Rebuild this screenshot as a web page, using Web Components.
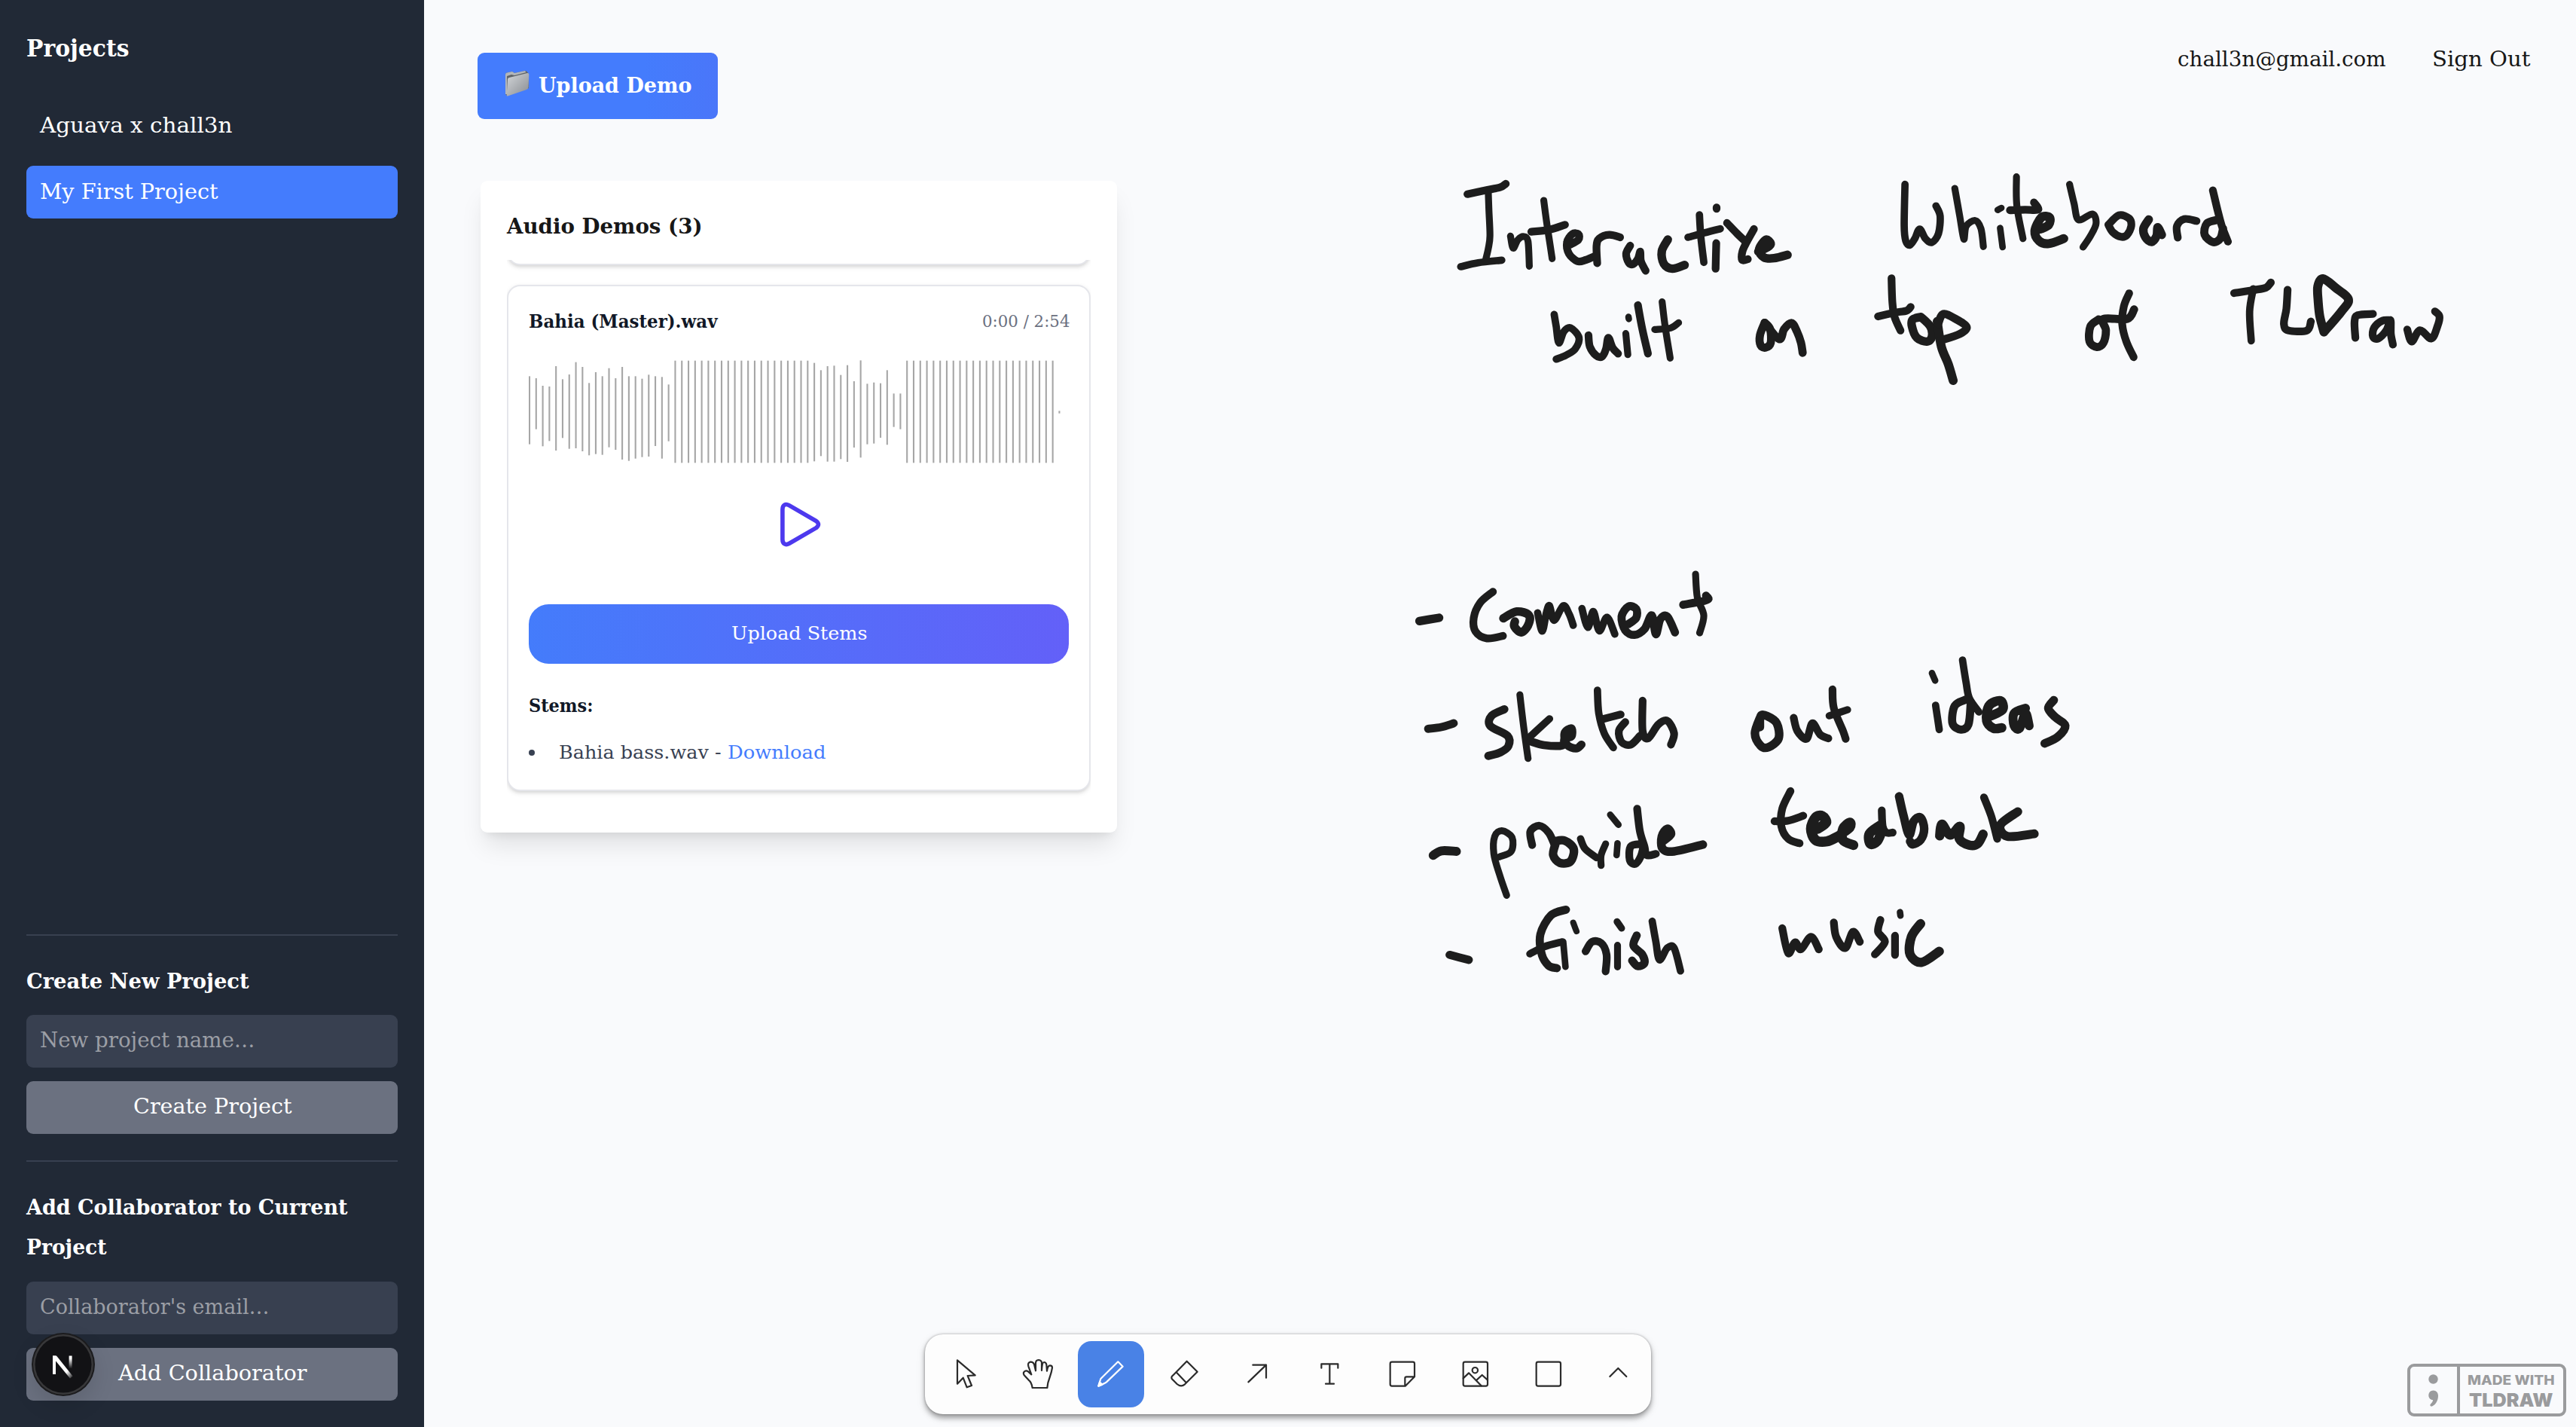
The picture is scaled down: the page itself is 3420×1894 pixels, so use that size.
<!DOCTYPE html>
<html lang="en">
<head>
<meta charset="utf-8">
<title>Projects</title>
<style>
  html, body { margin: 0; height: 100%; }
  body {
    background: #f9fafc;
    color: #171717;
    font-family: "DejaVu Serif", "Liberation Serif", serif;
    overflow: hidden;
  }
</style>
</head>
<body>
<studio-app></studio-app>

<script>
const define = (name, html, setup) => {
  const tpl = document.createElement('template');
  tpl.innerHTML = html;
  customElements.define(name, class extends HTMLElement {
    constructor() {
      super();
      this.attachShadow({ mode: 'open' }).append(tpl.content.cloneNode(true));
    }
    connectedCallback() {
      if (setup) setup(this, this.shadowRoot);
    }
  });
};

/* One line of text whose glyphs are stretched to fill a given measure. */
define('fit-text', `
  <style>
    :host { display: block; white-space: nowrap; flex: none; }
    span { display: inline-block; transform-origin: 0 50%; }
  </style>
  <span><slot></slot></span>`, (el, root) => {
  const span = root.querySelector('span');
  const w = +el.getAttribute('w');
  const size = el.getAttribute('size') || 28.5;
  el.style.fontSize = size + 'px';
  el.style.width = w + 'px';
  const natural = span.getBoundingClientRect().width;
  span.style.transform = `scaleX(${((w + 1.5) / natural).toFixed(4)})`;
});

define('project-item', `
  <style>
    :host { display: flex; align-items: center; box-sizing: border-box; height: 70px; padding: 0 0 1px 18px; border-radius: 9px; color: #fff; }
    :host([active]) { background: #447cfd; }
  </style>
  <slot></slot>`);

define('side-form', `
  <style>
    :host { display: flex; flex-direction: column; border-top: 2px solid #384050; padding-top: 34px; }
    .head { font-weight: 700; line-height: 52.8px; margin-bottom: 19px; }
    .field { display: flex; align-items: center; box-sizing: border-box; height: 70px; padding: 0 0 3px 18px; background: #384050; border-radius: 9px; color: #9b9ea5; margin-bottom: 18px; }
    .btn { display: flex; align-items: center; justify-content: center; box-sizing: border-box; height: 70px; padding-bottom: 3px; background: #6b7180; border-radius: 9px; }
  </style>
  <div class="head"><slot name="head"></slot></div>
  <div class="field"><slot name="field"></slot></div>
  <div class="btn"><slot name="action"></slot></div>`);

define('dev-badge', `
  <style>:host { display: block; position: absolute; left: 41.5px; top: 1768.5px; width: 84px; height: 84px; border-radius: 50%; box-shadow: 0 12px 30px rgba(0,0,0,.12); }</style>
  <svg width="84" height="84" viewBox="0 0 84 84">
    <defs>
      <linearGradient id="a" x1="0" y1="0" x2="1" y2="1"><stop offset=".7" stop-color="#fff"/><stop offset="1" stop-color="#fff" stop-opacity="0"/></linearGradient>
      <linearGradient id="b" x1="0" y1="0" x2="0" y2="1"><stop offset=".2" stop-color="#fff"/><stop offset="1" stop-color="#fff" stop-opacity="0"/></linearGradient>
    </defs>
    <circle cx="42" cy="42" r="42" fill="#1b1b1d"/>
    <circle cx="42" cy="42" r="40" fill="#38383a"/>
    <circle cx="42" cy="42" r="37.5" fill="#121215"/>
    <rect x="28" y="30.5" width="4" height="24.5" fill="#fff"/>
    <rect x="49.6" y="30.5" width="4" height="17" fill="url(#b)"/>
    <path d="M28 30.5h5L54.6 57.5L51 60.5L28 32.5z" fill="url(#a)"/>
  </svg>`);

define('project-sidebar', `
  <style>
    :host { display: flex; flex-direction: column; box-sizing: border-box; width: 563px; height: 1894px; padding: 36px 35px 35px; background: #212936; color: #fff; flex: none; }
    .title { display: flex; align-items: center; height: 56px; margin-bottom: 40px; font-weight: 700; }
    nav { display: flex; flex-direction: column; gap: 18px; flex: 1; }
    .forms { display: flex; flex-direction: column; gap: 35px; }
  </style>
  <div class="title"><fit-text w="135" size="31">Projects</fit-text></div>
  <nav>
    <project-item><fit-text w="254">Aguava x chall3n</fit-text></project-item>
    <project-item active><fit-text w="235">My First Project</fit-text></project-item>
  </nav>
  <div class="forms">
    <side-form>
      <fit-text slot="head" w="294">Create New Project</fit-text>
      <fit-text slot="field" w="284">New project name…</fit-text>
      <fit-text slot="action" w="209">Create Project</fit-text>
    </side-form>
    <side-form>
      <fit-text slot="head" w="425">Add Collaborator to Current</fit-text>
      <fit-text slot="head" w="105">Project</fit-text>
      <fit-text slot="field" w="303">Collaborator's email…</fit-text>
      <fit-text slot="action" w="249">Add Collaborator</fit-text>
    </side-form>
  </div>`);

define('upload-button', `
  <style>
    :host { display: flex; align-items: center; box-sizing: border-box; width: 319px; height: 88px; padding: 0 0 2px 35px; gap: 9px; border-radius: 9px; color: #fff; font-weight: 600; background: linear-gradient(90deg, #447cfd 70%, #4a76f9); }
    svg { flex: none; margin-bottom: 2px; }
  </style>
  <svg width="37" height="40" viewBox="0 0 37 40">
    <defs><linearGradient id="f" x1="0" y1="0" x2="1" y2="1"><stop offset="0" stop-color="#d3d6d9"/><stop offset="1" stop-color="#888c91"/></linearGradient></defs>
    <path d="M2 7Q2 5 4 4.600L11 3L14 5L28 2Q30 1.500 31 3.500L33 6V25L4 35L2 33Z" fill="#5e6368"/>
    <path d="M2 7Q2 5 4 4.600L11 3L14 5L28 2L29.500 4L14 8L10 7L4 9V33L2 33Z" fill="#b2b6ba"/>
    <path d="M5 13Q5 11.500 7 11L31 5Q33.500 4.600 33.300 7L32.500 24Q32.400 26 30 27L5 35.500Q3.600 36 3.700 34Z" fill="url(#f)"/>
  </svg>
  <fit-text w="202">Upload Demo</fit-text>`);

define('account-links', `
  <style>:host { display: flex; gap: 63px; line-height: 48px; color: #171717; }</style>
  <fit-text w="275">chall3n@gmail.com</fit-text>
  <fit-text w="129">Sign Out</fit-text>`);

define('wave-form', `
  <style>:host, svg { display: block; }</style>
  <svg width="717" height="152" viewBox="702 470 717 152" stroke="#a6a6a6" stroke-width="2.1"></svg>`, (el, root) => {
  const FULL = [776, 1183];
  const bars = [
    [838,1109],[846,1049],[876,1117],[879,1096],[798,1134],[850,1084],[831,1127],[782,1125],[801,1137],[865,1153],
    [822,1148],[838,1151],[806,1121],[846,1131],[801,1170],[838,1175],[838,1166],[848,1160],[832,1158],[838,1116],
    [841,1166],[871,1097],...Array(21).fill(FULL),[785,1177],[814,1156],[798,1178],[796,1178],[833,1168],[794,1179],
    [858,1122],[775,1162],[868,1109],[863,1106],[866,1083],[814,1111],[907,1040],[907,1049],...Array(23).fill(FULL),[976,986]
  ];
  root.querySelector('svg').innerHTML = bars.map(([a, b], i) => {
    const x = (703 + i * 8.793).toFixed(2);
    return `<path d="M${x} ${220 + a / 3}V${220 + b / 3}"/>`;
  }).join('');
});

define('demo-card', `
  <style>
    :host { display: block; box-sizing: border-box; width: 774.6px; border: 2.2px solid #e5e6eb; border-radius: 17.6px; background: #fff; padding: 21px 27px 0; flex: none; box-shadow: 0 2.2px 6px rgba(0,0,0,.1), 0 2.2px 4px -2px rgba(0,0,0,.1); }
  </style>
  <slot></slot>`);

define('demo-player', `
  <style>
    :host { display: flex; flex-direction: column; height: 647px; }
    .row { display: flex; justify-content: space-between; align-items: center; height: 50px; margin-bottom: 19px; }
    .name { font-weight: 600; color: #111827; }
    .time { color: #6b7080; }
    .play { display: flex; justify-content: center; align-items: center; height: 148.6px; margin-bottom: 31.4px; }
    .btn { display: flex; justify-content: center; align-items: center; box-sizing: border-box; height: 79px; padding-bottom: 2px; border-radius: 26.4px; color: #fff; background: linear-gradient(90deg, #447cfb, #6360f8); }
    .stems { margin-top: 34px; line-height: 44px; font-weight: 600; color: #111827; }
    .item { display: flex; align-items: center; margin-top: 18px; line-height: 44px; color: #384152; }
    .dot { width: 8px; height: 8px; border-radius: 50%; background: #384152; margin-right: 32px; }
    .link { color: #447cfd; margin-left: 10px; }
  </style>
  <div class="row">
    <fit-text class="name" w="249" size="25">Bahia (Master).wav</fit-text>
    <fit-text class="time" w="115" size="21.5">0:00 / 2:54</fit-text>
  </div>
  <wave-form></wave-form>
  <div class="play">
    <svg width="64" height="64" viewBox="0 0 64 64" fill="none" stroke="#4d39ee" stroke-width="5.6" stroke-linejoin="round">
      <path d="M10.900 12C10.900 6 15 4 19.500 6.700L55.500 27.500Q61.500 32 55.500 36.700L19.500 57.500C15 60 10.900 58 10.900 52Z"/>
    </svg>
  </div>
  <div class="btn"><fit-text w="179" size="25">Upload Stems</fit-text></div>
  <fit-text class="stems" w="84" size="25">Stems:</fit-text>
  <div class="item"><div class="dot"></div><fit-text w="214" size="25">Bahia bass.wav -</fit-text><fit-text class="link" w="129" size="25">Download</fit-text></div>`);

define('demo-panel', `
  <style>
    :host { display: flex; flex-direction: column; box-sizing: border-box; width: 845.4px; height: 865px; padding: 35px; border-radius: 9px; background: #fff; box-shadow: 0 22px 33px -6.6px rgba(0,0,0,.1), 0 8.8px 13.2px -8.8px rgba(0,0,0,.1); }
    .title { display: flex; align-items: center; height: 50px; margin-bottom: 20px; font-weight: 700; }
    .list { display: flex; flex-direction: column; gap: 26.500px; height: 725px; overflow: hidden; }
    .prev { height: 60px; margin-top: -53.500px; padding-top: 0; }
  </style>
  <div class="title"><fit-text w="258">Audio Demos (3)</fit-text></div>
  <div class="list">
    <demo-card class="prev"></demo-card>
    <demo-card><demo-player></demo-player></demo-card>
  </div>`);

/* Freehand pen layer: each entry is [originX, originY, unitsPerPxX, strokes]; y is sampled at 3 units per px.
   A stroke may start with "w=" to set the nib width. */
define('ink-layer', `
  <style>:host { display: block; position: absolute; left: 0; top: 0; pointer-events: none; } svg { display: block; }</style>
  <svg width="3420" height="1894" fill="none" stroke="#1d1d1d" stroke-linecap="round" stroke-linejoin="round"></svg>`, (el, root) => {
  const sheets = [
    [1900, 200, 2.24, `
      w=9.5 108,173 160,158 205,146 222,132
      w=8.5 170,165 172,240 175,340 170,390 163,430
      w=9 88,462 140,446 210,436
      w=8.5 236,340 244,388 258,355 275,342 288,360 292,460
      w=8.5 335,198 344,290 351,350 360,430
      298,323 350,315 398,295
      412,375 438,355 438,332 420,332 404,365 410,410 435,440 460,435 490,418
      494,448 492,380 500,350 530,335 562,345
      592,378 580,410 587,445 600,452 615,430 622,402 624,440 638,478
      w=10.5 704,354 686,400 692,450 718,470 754,455
      w=9 798,255 802,340 811,445
      w=9 764,345 810,328 860,311
      848,368 846,470
      849,226 849,231
      880,288 910,330 935,362
      960,312 940,360 926,400 925,435 942,432
      w=10.5 973,402 1000,385 1010,370 995,355 975,395 990,425 1020,428 1060,415
      w=9 366,652 372,700 380,765 395,720 415,706 440,745 428,790 400,815 372,830
      468,735 472,780 490,815 508,820 520,790 527,745 540,785 556,808
      w=8.5 579,728 585,812
      w=8 587,662 588,670
      615,615 628,710 645,808
      w=8.5 687,602 696,700 711,826
      w=8.5 665,712 712,706 736,685
      w=10 992,685 978,735 980,775 995,784 1010,765 1008,710 992,685
      w=10 992,685 1035,750 1050,710 1072,686 1088,720 1100,765 1105,805`],
    [2450, 200, 1.8447, `
      w=9 146,134 144,300 148,360 158,376 170,350 182,312 196,350 212,365 228,330 232,260 222,220
      w=8.5 268,150 280,260 290,352 296,300 318,278 332,310 338,382
      w=8 379,308 385,384
      w=8 373,236 382,228
      w=8.5 419,104 420,220 435,350
      403,237 440,235 472,235 462,206
      w=11 478,312 498,295 500,266 480,266 464,320 475,360 498,370 535,350
      w=8.5 549,134 560,210 571,275 605,252 614,290 600,340 582,384
      644,295 670,257 695,270 700,300 690,335 675,343 655,325 644,295
      w=10.5 743,274 730,310 735,345 750,363 762,340 765,305 775,335
      w=9.5 814,346 812,300 830,272 860,280
      900,158 912,240 922,300 937,362
      w=10 912,275 885,290 880,335 900,364 918,350 925,310
      113,508 115,600 120,660 135,716
      80,660 120,645 150,637 160,622
      w=10.5 185,662 165,672 163,700 175,745 200,760 212,740 208,700 185,662
      w=11 225,680 235,780 252,850 264,915
      w=10 227,690 240,650 270,670 297,702 280,730 234,755
      w=10 620,672 600,700 598,760 616,782 632,765 638,715 632,670 690,670 707,632
      695,568 682,620 678,690 688,760 706,822
      952,567 1000,555 1030,545 1042,525
      w=9 999,550 990,640 994,757
      1083,554 1080,630 1074,690 1085,716 1130,716 1140,680
      w=11 1172,722 1162,660 1158,600 1157,540 1170,510 1200,545 1232,592 1215,640 1172,722
      1249,745 1247,680 1255,655 1292,650
      1335,675 1315,677 1295,705 1292,740 1305,748 1325,715 1335,675 1336,730 1341,772
      1376,712 1387,760 1407,715 1435,748 1450,700 1455,660 1444,640`],
    [1850, 740, 1.6505, `
      w=10.5 57,253 100,240
      w=9.5 218,136 190,180 176,240 180,295 205,322 240,312
      w=10.500 241,242 270,215 297,230 295,270 280,298 265,275 266,255
      w=9 316,220 326,293 335,220 342,192 352,250 372,192 385,225 394,270
      w=9 413,203 426,278 438,215 451,292 468,238 485,305
      w=10 515,265 532,240 532,205 515,195 500,235 508,290 528,308 550,285 566,230 575,305 585,245 600,235 617,298
      w=8.5 662,66 666,160 680,230 671,300
      w=10 635,188 675,175 690,165 685,152
      w=10 76,682 105,675 132,660
      w=10 243,604 215,630 212,670 250,710 252,750 235,775 208,790
      w=8.5 277,546 285,670 295,800
      w=9 342,642 300,712
      w=10 300,732 330,747 370,748 375,720 390,712 390,680 375,700 380,745 400,760 412,745
      w=9 447,528 450,620 462,700 482,757
      455,645 498,625
      508,655 494,690 500,735 520,745 540,710
      546,570 546,690 558,720 580,665 600,650 615,700 608,745
      w=10.5 805,630 792,700 805,750 822,755 844,720 840,660 820,632 805,630 803,675
      877,638 885,690 905,722 918,660 935,705 953,720
      962,525 965,600 985,690 991,722
      w=9 955,630 995,606
      w=9 1188,588 1196,685
      w=8 1180,460 1187,490
      w=9 1247,408 1255,500 1262,560 1283,615
      w=10 1255,565 1230,590 1225,660 1243,685 1260,665 1265,580
      w=11.5 1310,630 1335,605 1330,570 1305,590 1300,650 1315,680 1333,678
      w=11 1385,600 1360,620 1360,670 1372,680 1385,620 1393,670
      w=10.500 1447,568 1435,600 1450,635 1472,670 1455,715 1427,740`],
    [1850, 1020, 1.6505, `
      w=11 87,346 105,328 138,330
      w=8.5 248,505 232,420 220,340 222,270 238,248 260,275 258,330 232,352
      w=9.500 304,305 300,250 320,228 340,255 352,300
      w=10.500 352,290 375,287 395,320 388,370 365,376 350,345 355,300
      w=9 410,280 420,320 445,355
      w=8.5 465,300 455,345 455,386
      w=8 491,298 489,345
      w=8 475,184 493,224
      534,160 540,250 550,310 555,345 575,340
      545,300 520,310 518,365 530,380 542,350 548,310
      w=10.5 590,290 608,262 600,240 588,270 590,320 615,330 678,303
      w=9.5 870,90 852,160 850,230 865,280 890,298
      835,210 865,208 898,188
      w=12.5 930,240 948,215 940,190 925,195 915,240 925,285 950,290 975,270
      w=12 980,262 1000,235 1000,215 985,240 985,285 1008,305
      1070,167 1072,230 1080,255 1094,255
      w=12 1065,228 1043,260 1045,300 1060,290 1070,250
      w=10.500 1108,111 1118,190 1130,265 1140,210 1155,195 1163,240 1155,285 1138,302 1132,290
      w=11.5 1197,268 1202,222 1220,265 1241,230 1240,280 1262,305 1280,300 1292,262
      1294,115 1310,190 1323,280
      w=11 1368,172 1330,225 1345,270 1404,260
      w=10 123,742 165,762
      w=10 378,562 345,585 322,660 325,740 340,785 358,795
      w=9 299,738 330,710 370,690
      w=8 372,690 377,790
      w=7.5 394,614 401,648
      w=9.5 421,728 435,690 455,695 467,740 465,808
      w=8.5 491,704 491,790
      w=8.5 490,610 500,636
      w=10 533,665 526,705 545,740 550,775 535,787 523,765
      w=9 567,608 575,690 583,762 600,715 615,715 629,806
      w=9.5 852,636 865,735 880,692 893,720 915,670 932,720
      965,613 970,670 990,715 1007,650 1022,690
      1067,603 1062,650 1077,690 1055,740
      1099,666 1099,742
      w=8 1110,572 1111,586
      w=11.5 1155,618 1135,670 1132,740 1157,772 1196,728`]
  ];
  const smooth = p => {
    let d = `M${p[0]}`;
    for (let i = 0; i < p.length - 1; i++) {
      const a = p[i - 1] || p[i], b = p[i], c = p[i + 1], e = p[i + 2] || c;
      d += `C${[b[0] + (c[0] - a[0]) / 6, b[1] + (c[1] - a[1]) / 6, c[0] - (e[0] - b[0]) / 6, c[1] - (e[1] - b[1]) / 6, c[0], c[1]].map(v => v.toFixed(1))}`;
    }
    return d;
  };
  root.querySelector('svg').innerHTML = sheets.map(([ox, oy, k, text]) =>
    text.trim().split('\n').map(line => {
      const parts = line.trim().split(' ');
      const w = (parts[0].startsWith('w=') ? parts.shift().slice(2) : 9.5) * 1.08;
      const pts = parts.map(s => s.split(',').map(Number)).map(([x, y]) => [ox + x / k, oy + y / 3]);
      return `<path stroke-width="${w.toFixed(2)}" d="${smooth(pts)}"/>`;
    }).join('')).join('');
});

define('tool-button', `
  <style>
    :host { display: block; width: 88px; height: 88px; border-radius: 18px; color: #2b2b2b; flex: none; }
    :host([small]) { width: 79.2px; }
    :host([active]) { background: #4982e6; color: #fff; }
    svg { display: block; }
  </style>
  <svg height="88" fill="none" stroke="currentColor" stroke-width="6.6" stroke-linejoin="round" stroke-linecap="round"></svg>`, (el, root) => {
  const icons = {
    select: '<path d="M99 76V170L122 146L137 184L156 177L140 138L170 136Z"/>',
    hand: '<path d="M110 186H169L172 166L185 125L189 106Q189 97 180 97Q171 97 168 119L166 94Q164 84 156 84Q149 84 147 117V84Q144 75 134 75Q123 76 123 88V118L117 92Q112 82 102 83Q90 86 94 100L106 133L93 121Q84 115 77 122Q71 129 80 139L94 154Q107 164 110 186Z"/>',
    draw: '<path d="M82 179L91 150L160 82L179 101L114 163Q108 168 82 179Z"/><path fill="currentColor" d="M82 179L87 164L97 173Z"/>',
    eraser: '<path d="M143 80L185 122L135 172Q120 185 104 171L87 154Q77 145 87 137ZM101 124L138 163"/>',
    arrow: '<path d="M97 163L168 95M115 95H168V146"/>',
    text: '<path d="M97 107V91H163V107M130 91V170M114 170H147"/>',
    note: '<path d="M90 83H173Q180 83 180 90V142L143 179H90Q83 179 83 172V90Q83 83 90 83ZM180 142H148Q142 142 142 148V179"/>',
    image: '<rect x="83" y="83" width="97" height="96" rx="7"/><circle cx="130" cy="116" r="11"/><path d="M83 148L105 127L155 178M134 157L158 135L180 155"/>',
    rect: '<rect x="83" y="83" width="97" height="96" rx="7"/>',
    more: '<path d="M85 141L118 108L151 141"/>'
  };
  const small = el.hasAttribute('small');
  const svg = root.querySelector('svg');
  svg.setAttribute('width', small ? 79.2 : 88);
  svg.setAttribute('viewBox', small ? '0 0 237.6 264' : '0 0 264 264');
  svg.innerHTML = icons[el.getAttribute('icon')];
});

define('tool-bar', `
  <style>
    :host { display: flex; align-items: center; gap: 8.8px; box-sizing: border-box; width: 964px; height: 105.500px; padding-left: 9.600px; padding-bottom: .5px; border-radius: 24px; background: #fdfdfd; box-shadow: 0 0 3px rgba(0,0,0,.3), 0 4.400px 7px rgba(0,0,0,.35), 0 4px 16px rgba(0,0,0,.06); }
  </style>
  <tool-button icon="select"></tool-button>
  <tool-button icon="hand"></tool-button>
  <tool-button icon="draw" active></tool-button>
  <tool-button icon="eraser"></tool-button>
  <tool-button icon="arrow"></tool-button>
  <tool-button icon="text"></tool-button>
  <tool-button icon="note"></tool-button>
  <tool-button icon="image"></tool-button>
  <tool-button icon="rect"></tool-button>
  <tool-button icon="more" small></tool-button>`);

define('made-with', `
  <style>
    :host { display: flex; box-sizing: border-box; width: 211px; height: 70px; border: 4.5px solid #9a9b9d; border-radius: 9px; color: #9a9b9d; font-family: Inter, "Open Sans", sans-serif; background: #f9fafc; }
    .mark { width: 61.5px; border-right: 4px solid #9a9b9d; flex: none; }
    .words { display: flex; flex-direction: column; padding: 7px 0 0 10.500px; }
    .a { font-weight: 800; line-height: 22px; }
    .b { font-weight: 900; line-height: 30px; margin-left: 2px; }
    svg { display: block; }
  </style>
  <div class="mark"><svg width="61" height="61" viewBox="0 0 61 61" fill="#9a9b9d"><circle cx="30.500" cy="16.500" r="6.200"/><path d="M30.500 31.500C34.500 31.500 37 34.500 37 38.500C37 45 33.500 50.500 29 52.500C26.500 53.200 25.500 51 27 49.500C29 47.500 30 46 30 44C26.500 44 24.300 41.300 24.300 38C24.300 34.300 27 31.500 30.500 31.500Z"/></svg></div>
  <div class="words"><fit-text class="a" w="114" size="17">MADE WITH</fit-text><fit-text class="b" w="110" size="24.500">TLDRAW</fit-text></div>`);

define('studio-app', `
  <style>
    :host { display: flex; width: 3420px; height: 1894px; position: relative; overflow: hidden; background: #f9fafc; }
    main { flex: 1; display: flex; flex-direction: column; min-width: 0; }
    header { display: flex; justify-content: space-between; align-items: flex-start; padding: 70px 62px 0 71px; margin-bottom: 82px; }
    account-links { margin-top: -15px; }
    demo-panel { margin-left: 75px; }
    .dock { position: absolute; left: 0; right: 0; bottom: 14px; display: grid; grid-template-columns: 1228px auto 1fr; align-items: end; }
    tool-bar { grid-column: 2; margin-bottom: 3.500px; }
    made-with { justify-self: end; margin-right: 13px; }
  </style>
  <project-sidebar></project-sidebar>
  <main>
    <header><upload-button></upload-button><account-links></account-links></header>
    <demo-panel></demo-panel>
  </main>
  <ink-layer></ink-layer>
  <div class="dock"><tool-bar></tool-bar><made-with></made-with></div>
  <dev-badge></dev-badge>`);
</script>
</body>
</html>
